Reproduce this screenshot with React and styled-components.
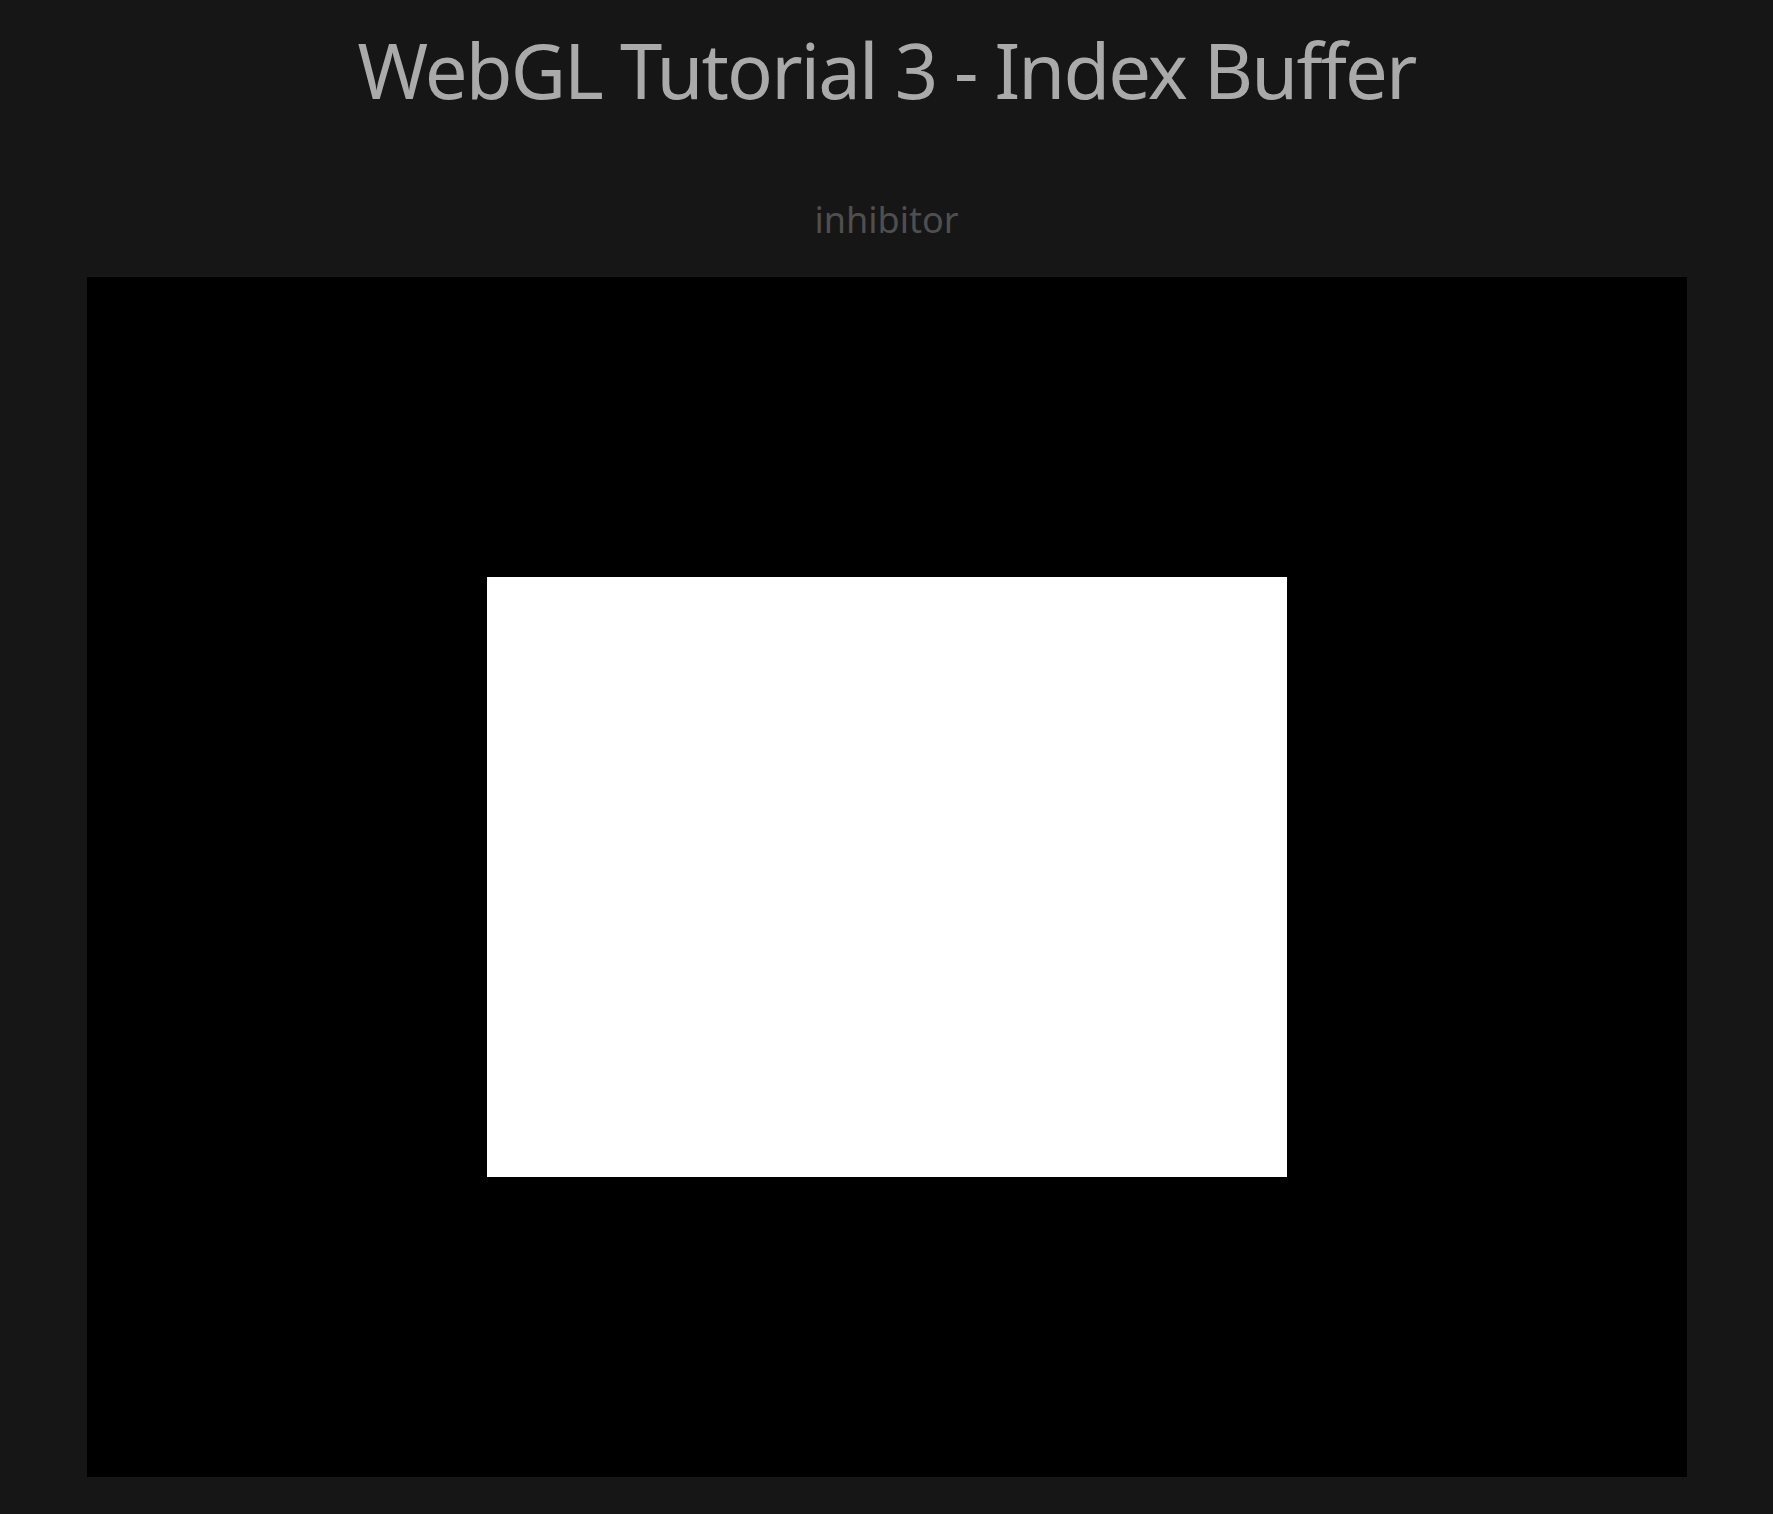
import React from "react";
import styled, { createGlobalStyle } from "styled-components";

const Global = createGlobalStyle`
  html, body { margin: 0; padding: 0; background: #161616; }
  body { font-family: "Noto Sans", "DejaVu Sans", sans-serif; }
`;

const Page = styled.div`
  display: flex;
  flex-direction: column;
  align-items: center;
  padding-bottom: 37px;
`;

const Title = styled.h1`
  margin: 20px 0 0;
  font-family: "Noto Sans", sans-serif;
  font-weight: 400;
  font-size: 76px;
  line-height: 100px;
  letter-spacing: -1.9px;
  color: #aaaaaa;
`;

const Author = styled.p`
  margin: 75px 0 0;
  font-family: "Noto Sans", sans-serif;
  font-size: 36px;
  line-height: 50px;
  color: #4f4f4f;
`;

const Canvas = styled.div`
  margin-top: 32px;
  width: 1600px;
  height: 1200px;
  background: #000;
  display: flex;
  align-items: center;
  justify-content: center;
`;

const Quad = styled.div`
  width: 800px;
  height: 600px;
  background: #fff;
`;

export default function App() {
  return (
    <>
      <Global />
      <Page>
        <Title>WebGL Tutorial 3 - Index Buffer</Title>
        <Author>inhibitor</Author>
        <Canvas>
          <Quad />
        </Canvas>
      </Page>
    </>
  );
}
